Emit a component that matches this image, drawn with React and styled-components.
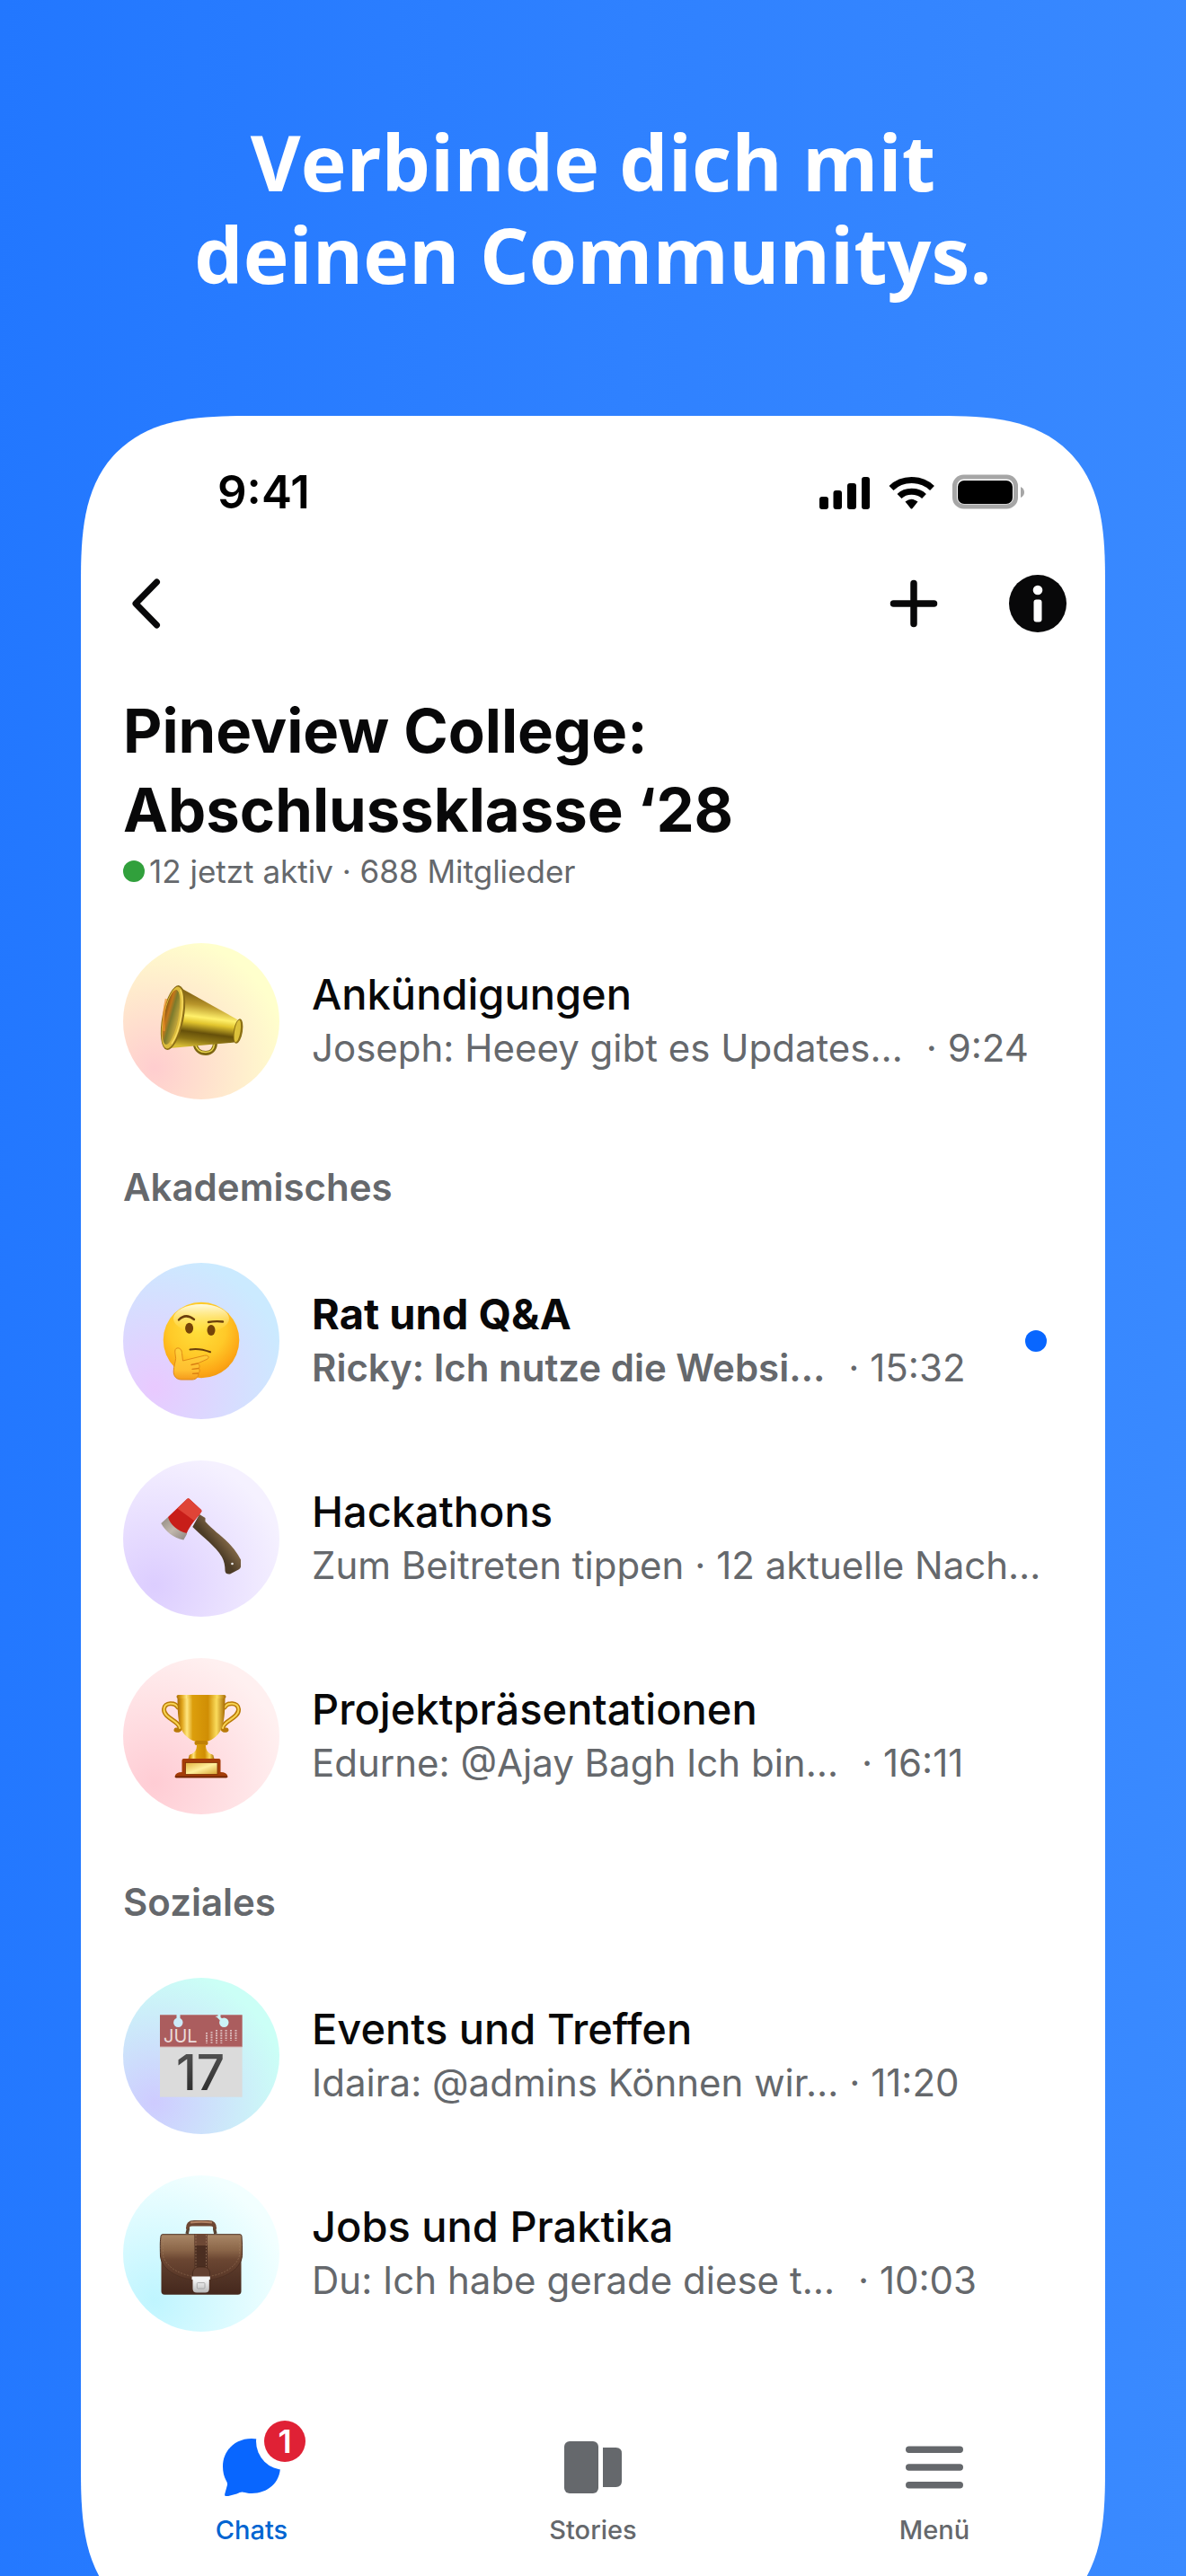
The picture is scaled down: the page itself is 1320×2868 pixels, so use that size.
import React from "react";
import styled, { createGlobalStyle } from "styled-components";

const GlobalStyle = createGlobalStyle`
  * {
    box-sizing: border-box;
  }

  body {
    margin: 0;
    background: #2e80ff;
  }
`;

const Page = styled.main`
  min-height: 100vh;
  padding: 128px 90px 0;
  overflow: hidden;
  background: linear-gradient(92deg, #2277ff 0%, #2f81ff 50%, #3a8aff 100%);
  font-family: Inter, "Liberation Sans", sans-serif;
  color: #080809;
`;

const Headline = styled.h1`
  margin: 0 0 129px;
  font-family: "Open Sans", Lato, sans-serif;
  font-size: 86px;
  font-weight: 700;
  line-height: 103px;
  text-align: center;
  color: #fff;
`;

// the lower edge of the phone runs out of the page
const Phone = styled.section`
  margin-bottom: -67px;
  padding: 55px 0 100px;
  border-radius: 145px;
  background: #fff;

  @supports (corner-shape: superellipse(1.5)) {
    border-radius: 185px;
    corner-shape: superellipse(1.5);
  }
`;

const StatusBar = styled.div`
  display: flex;
  align-items: center;
  justify-content: space-between;
  height: 60px;
  margin-bottom: 62px;
  padding: 0 88px 0 152px;
`;

const Clock = styled.time`
  font-size: 51px;
  font-weight: 600;
  line-height: 60px;
  color: #000;
`;

const TopBar = styled.header`
  display: flex;
  gap: 74px;
  margin-bottom: 66px;
  padding: 0 43px 0 47px;
`;

const IconButton = styled.button`
  width: 64px;
  height: 64px;
  margin-right: ${props => (props.$push ? "auto" : 0)};
  padding: 0;
  border: 0;
  background: none;
  color: inherit;

  svg {
    display: block;
  }
`;

const Content = styled.div`
  padding: 0 47px;
`;

const GroupTitle = styled.h2`
  margin: 0;
  font-size: 67px;
  font-weight: 700;
  line-height: 88px;
`;

const GroupMeta = styled.p`
  display: flex;
  align-items: center;
  gap: 5px;
  margin: 0 0 56px;
  font-size: 35px;
  line-height: 48px;
  color: #65686c;
`;

const Dot = styled.span`
  flex: none;
  width: 24px;
  height: 24px;
  margin-right: ${props => (props.$unread ? "18px" : 0)};
  border-radius: 50%;
  background: ${props => (props.$unread ? "#0866ff" : "#31a03c")};
`;

const SectionTitle = styled.h3`
  margin: 68px 0 54px;
  font-size: 42px;
  font-weight: 600;
  line-height: 60px;
  color: #65686c;
`;

const ChatList = styled.ul`
  display: flex;
  flex-direction: column;
  gap: 46px;
  margin: 0;
  padding: 0;
  list-style: none;
`;

const ChatRow = styled.a`
  display: flex;
  align-items: center;
  gap: 36px;
  color: inherit;
  text-decoration: none;
`;

const Avatar = styled.span`
  flex: none;
  width: 174px;
  height: 174px;
  border-radius: 50%;
  background: radial-gradient(
    circle at 20% 80%,
    ${props => props.$from},
    ${props => props.$to} 150px
  );

  svg {
    display: block;
  }
`;

const ChatText = styled.span`
  flex: 1;
  min-width: 0;
`;

const ChatName = styled.span`
  display: block;
  font-size: 47px;
  font-weight: ${props => (props.$unread ? 700 : 500)};
  line-height: 60px;
`;

const ChatPreview = styled.span`
  display: flex;
  gap: ${props => (props.$tight ? "12px" : "26px")};
  font-size: 42px;
  line-height: 60px;
  white-space: nowrap;
  color: #65686c;
`;

const Message = styled.span`
  font-weight: ${props => (props.$unread ? 600 : 400)};
`;

const TabBar = styled.nav`
  display: grid;
  grid-template-columns: repeat(3, 1fr);
  margin-top: 119px;
`;

const Tab = styled.a`
  display: flex;
  flex-direction: column;
  align-items: center;
  gap: 20px;
  font-size: 29px;
  font-weight: 500;
  line-height: 36px;
  text-decoration: none;
  color: ${props => (props.$active ? "#0064d1" : "#65686c")};
`;

const TabIcon = styled.span`
  position: relative;
  width: 64px;
  height: 64px;

  svg {
    display: block;
  }
`;

const Badge = styled.span`
  position: absolute;
  top: -20px;
  right: -28px;
  width: 46px;
  height: 46px;
  border-radius: 50%;
  box-shadow: 0 0 0 9px #fff;
  background: #e02135;
  font-size: 36px;
  font-weight: 600;
  line-height: 46px;
  text-align: center;
  color: #fff;
`;

const StatusIcons = () => (
    <svg width="230" height="40" viewBox="0 0 230 40" aria-hidden="true">
        <rect x="0" y="25" width="10" height="14" rx="3" />
        <rect x="15.500" y="18" width="9.500" height="21" rx="3" />
        <rect x="31" y="10" width="10" height="29" rx="3" />
        <rect x="47" y="3" width="9" height="36" rx="3" />
        <g fill="none" stroke="#000" strokeWidth="7">
            <path d="M80 15.500C92 3.500 113 3.500 125.500 15.500" />
            <path d="M89 24.500C96 17.500 109 17.500 116.500 24.500" />
        </g>
        <path d="M95.500 30.500Q102.500 25 109.500 30.500L103.500 38Q102.500 39 101.500 38Z" />
        <rect x="150.500" y="3" width="68" height="33" rx="10" fill="none" stroke="#a6a6a6" strokeWidth="5" />
        <rect x="154" y="7" width="61" height="26" rx="7" />
        <path d="M224 14v12q4-2 4-6t-4-6z" fill="#a6a6a6" />
    </svg>
);

const BackIcon = () => (
    <svg width="64" height="64" viewBox="0 0 64 64" fill="none" stroke="currentColor" strokeWidth="7" strokeLinecap="round" strokeLinejoin="round">
        <path d="M37.500 8L14 32l23.500 24" />
    </svg>
);

const PlusIcon = () => (
    <svg width="64" height="64" viewBox="0 0 64 64" stroke="currentColor" strokeWidth="7.500" strokeLinecap="round">
        <path d="M32 9.500v45M9.500 32h45" />
    </svg>
);

const InfoIcon = () => (
    <svg width="64" height="64" viewBox="0 0 64 64">
        <circle cx="32" cy="32" r="32" fill="currentColor" />
        <circle cx="32" cy="17" r="5.300" fill="#fff" />
        <rect x="27.500" y="27.500" width="9" height="25" rx="3" fill="#fff" />
    </svg>
);

const ChatsIcon = () => (
    <svg width="64" height="64" viewBox="0 0 64 64" fill="#0866ff">
        <path d="M32 0C50 0 64 13 64 31S50 61 32 61c-4 0-7-1-9.500-1.300-2-.4-4 .5-7 1.800L5 64.300c-2 .6-3.200-.6-2.800-2.500L5 51.500c.3-1.500-.3-3-1.200-4.500C1.200 42 0 37 0 31 0 13 14 0 32 0z" />
    </svg>
);

const StoriesIcon = () => (
    <svg width="64" height="64" viewBox="0 0 64 64" fill="#65686c">
        <rect x="0" y="3" width="38" height="58" rx="6" />
        <path d="M43 10h14.500q6.500 0 6.500 6.500v31q0 6.500-6.500 6.500H43z" />
    </svg>
);

const MenuIcon = () => (
    <svg width="64" height="64" viewBox="0 0 64 64" fill="#65686c">
        <rect y="8.500" width="64" height="7.500" rx="3.700" />
        <rect y="28.200" width="64" height="7.500" rx="3.700" />
        <rect y="48" width="64" height="7.500" rx="3.700" />
    </svg>
);

/* pictures inside the round avatars, all on a 174px canvas */

const Megaphone = () => (
    <svg width="174" height="174" viewBox="0 0 174 174">
        <defs>
            <linearGradient id="cone" x1="0.550" y1="0" x2="0.400" y2="1">
                <stop offset="0.120" stopColor="#8a6a16" />
                <stop offset="0.280" stopColor="#b8952a" />
                <stop offset="0.480" stopColor="#fff06a" />
                <stop offset="0.580" stopColor="#e2c52e" />
                <stop offset="0.740" stopColor="#66500a" />
                <stop offset="0.860" stopColor="#8b7314" />
                <stop offset="1" stopColor="#d8bd35" />
            </linearGradient>
            <linearGradient id="bell" x1="0" y1="0" x2="1" y2="0.300">
                <stop offset="0" stopColor="#6f4a10" />
                <stop offset="0.350" stopColor="#c4761a" />
                <stop offset="0.600" stopColor="#7c7a2c" />
                <stop offset="1" stopColor="#b99f3a" />
            </linearGradient>
        </defs>
        <path d="M80 112c1 7 6 10.500 12 10.500s10-4 10.500-11" fill="none" stroke="#7d6512" strokeWidth="5" />
        <path d="M80.500 113c1.500 6 6 8.500 11.500 8.500s9-3.500 9.500-9" fill="none" stroke="#ead64a" strokeWidth="1.500" />
        <path d="M66 51L127 85l-3 25.500L52 117z" fill="url(#cone)" />
        <ellipse cx="128" cy="98" rx="5" ry="14" transform="rotate(9 128 98)" fill="#8c7014" />
        <ellipse cx="127.300" cy="98" rx="3.200" ry="12.500" transform="rotate(9 127.300 98)" fill="#dcc13a" />
        <ellipse cx="55.500" cy="83" rx="12" ry="36.500" transform="rotate(11 55.500 83)" fill="#8a6c18" />
        <ellipse cx="55" cy="83" rx="10.500" ry="35" transform="rotate(11 55 83)" fill="#dcbb3c" />
        <ellipse cx="53.500" cy="82.500" rx="8" ry="31" transform="rotate(11 53.500 82.500)" fill="url(#bell)" />
        <path d="M48 62q-4 16-2.500 36" fill="none" stroke="#f0932a" strokeWidth="2.500" opacity="0.700" />
        <path d="M64 52c5 14 0 45-10 60" fill="none" stroke="#ffe46b" strokeWidth="1.500" opacity="0.800" />
    </svg>
);

const Thinking = () => (
    <svg width="174" height="174" viewBox="0 0 174 174">
        <defs>
            <radialGradient id="face" cx="0.450" cy="0.350" r="0.680">
                <stop offset="0" stopColor="#ffe03c" />
                <stop offset="0.550" stopColor="#ffc928" />
                <stop offset="0.850" stopColor="#fda816" />
                <stop offset="1" stopColor="#f2980f" />
            </radialGradient>
            <linearGradient id="shine" x1="0" y1="0" x2="0" y2="1">
                <stop offset="0" stopColor="#fffbe0" />
                <stop offset="1" stopColor="#ffec6a" stopOpacity="0" />
            </linearGradient>
            <linearGradient id="hand" x1="0" y1="0" x2="0" y2="1">
                <stop offset="0" stopColor="#ffd23b" />
                <stop offset="0.700" stopColor="#ffbf30" />
                <stop offset="1" stopColor="#f59a1c" />
            </linearGradient>
        </defs>
        <circle cx="87" cy="86" r="42.300" fill="url(#face)" />
        <ellipse cx="87" cy="62" rx="31" ry="16" fill="url(#shine)" />
        <ellipse cx="73.600" cy="72.800" rx="4.500" ry="6" fill="#754308" />
        <ellipse cx="98" cy="75" rx="4.500" ry="6" fill="#754308" />
        <g fill="none" stroke="#6b3f0c" strokeLinecap="round">
            <path d="M62 63.500q7.500-8 17-.5" strokeWidth="2.400" />
            <path d="M95 66q8-1.500 16-.5" strokeWidth="2.400" />
            <path d="M74.500 96.500q10-2 22.500 2.800" strokeWidth="2" />
        </g>
        <path d="M60 95c3-.8 5.500 2 5.500 5.500l1 8.500 24-5.800c4.500-1 6.500 2.500 2.500 4.300L83 112c2.500 1.500 2.500 4 1.200 5.500 1.600 1.600 1.300 4-.4 5.200.8 3.300-2.300 7.300-6.800 7.300H65c-5.500 0-8.800-3.500-8.800-9 0-6.500 2.300-10.500 2.400-14.500 0-4-2.600-10.500 1.400-11.500z" fill="url(#hand)" stroke="#e08a16" strokeWidth="1" />
        <path d="M83 112l-7 1.500M84 117.500l-7 .8M83.500 123l-6 .3" stroke="#d97e12" strokeWidth="1.300" fill="none" strokeLinecap="round" />
    </svg>
);

const Axe = () => (
    <svg width="174" height="174" viewBox="0 0 174 174">
        <defs>
            <linearGradient id="wood" x1="0.700" y1="0.200" x2="0.400" y2="0.500">
                <stop offset="0" stopColor="#433420" />
                <stop offset="0.400" stopColor="#7d6444" />
                <stop offset="1" stopColor="#4d3c27" />
            </linearGradient>
            <linearGradient id="steel" x1="0" y1="0" x2="1" y2="1">
                <stop offset="0" stopColor="#8f8880" />
                <stop offset="0.500" stopColor="#c2b8ad" />
                <stop offset="1" stopColor="#8c8580" />
            </linearGradient>
        </defs>
        <path d="M85 60l6.500 4v4c8 9 17 15 25 23 7 7 11 13 14.500 19.500v8q-.5 2-2.500 3l-9.500 5q-5 .5-5.500-3.500c0-6-1-11-3.500-15.500-7-12-21-22-32.700-33.500z" fill="url(#wood)" />
        <circle cx="121.500" cy="115" r="1.300" fill="#eee" />
        <path d="M50 63l-7.700 7c4 8 14 17 25 18.500l4-7z" fill="url(#steel)" />
        <path d="M71 43q1.600-1.500 3 0L87 55q1 1 0 2.500c-6 8-12 14-16.200 23.500C61 79 52 71 50 63z" fill="#c81e19" />
        <path d="M71 43q1.600-1.500 3 0L87 55q1 1 0 2.500L79 67 60.500 53.500z" fill="#df4437" />
    </svg>
);

const Trophy = () => (
    <svg width="174" height="174" viewBox="0 0 174 174">
        <defs>
            <linearGradient id="gold" x1="0" y1="0" x2="1" y2="0">
                <stop offset="0" stopColor="#a86a02" />
                <stop offset="0.100" stopColor="#e0a51c" />
                <stop offset="0.200" stopColor="#ffe680" />
                <stop offset="0.320" stopColor="#dc9e0c" />
                <stop offset="0.640" stopColor="#d08e04" />
                <stop offset="0.820" stopColor="#fbdc5c" />
                <stop offset="1" stopColor="#a86a02" />
            </linearGradient>
            <linearGradient id="plaque" x1="0" y1="0" x2="1" y2="1">
                <stop offset="0" stopColor="#e2b23e" />
                <stop offset="0.500" stopColor="#fff09c" />
                <stop offset="1" stopColor="#d8a232" />
            </linearGradient>
        </defs>
        <g fill="none" strokeLinecap="round">
            <path d="M61 55c-3-6-15-6-15.500 2C45 67 63 70 63 78q0 3-4 2" stroke="#b97a08" strokeWidth="5" />
            <path d="M61 55c-3-6-15-6-15.500 2C45 67 63 70 63 78" stroke="#f8d453" strokeWidth="2" />
            <path d="M113 55c3-6 15-6 15.500 2 .5 10-17.500 13-17.500 21q0 3 4 2" stroke="#b97a08" strokeWidth="5" />
            <path d="M113 55c3-6 15-6 15.500 2 .5 10-17.500 13-17.500 21" stroke="#f8d453" strokeWidth="2" />
        </g>
        <path d="M60.500 43h53c-.2 14-.3 24-3 33-3 9-10 15.500-18 17h-11c-8-1.500-15-8-18-17-2.700-9-2.800-19-3-33z" fill="url(#gold)" />
        <rect x="59.500" y="41" width="55" height="4" rx="2" fill="url(#gold)" />
        <rect x="79.500" y="92" width="15" height="5" rx="2.500" fill="#c08106" />
        <path d="M82 96h10c0 7 2 9 9 13H73c7-4 9-6 9-13z" fill="url(#gold)" />
        <path d="M75 107h24q2.500 2 2.500 5.500h-29q0-3.500 2.500-5.500z" fill="url(#gold)" />
        <path d="M67.500 112h39q2 0 2 2v13q7 0 8 5 0 1.300-1.500 1.300H59q-1.500 0-1.500-1.300 1-5 8-5v-13q0-2 2-2z" fill="#a43d08" />
        <path d="M58 131.500h58v1q-.5.800-1 .8H59q-1 0-1-1z" fill="#6f2604" />
        <rect x="69.500" y="116.500" width="35.500" height="13" fill="url(#plaque)" stroke="#7e3006" strokeWidth="0.800" />
    </svg>
);

const Calendar = () => (
    <svg width="174" height="174" viewBox="0 0 174 174">
        <defs>
            <linearGradient id="ink" x1="0" y1="0" x2="0" y2="1">
                <stop offset="0" stopColor="#5a5a5a" />
                <stop offset="1" stopColor="#262626" />
            </linearGradient>
            <mask id="holes">
                <rect width="174" height="174" fill="#fff" />
                <circle cx="61.300" cy="49.700" r="5.200" />
                <circle cx="112.300" cy="49.700" r="5.200" />
                <path d="M59.500 40h4v8h-4zM105.500 40h3v4l4 3-3 2-5-5-2-1 3-.5z" />
            </mask>
        </defs>
        <g mask="url(#holes)">
            <rect x="41" y="41.300" width="91.600" height="91.400" fill="#dbdbdb" />
            <rect x="41" y="41.300" width="91.600" height="35.500" fill="#ab5d5e" />
            <path d="M41 76.800h91.600" stroke="#c99a9a" strokeWidth="0.800" />
        </g>
        <text x="45" y="71.500" fontSize="20" fontFamily="Inter, sans-serif" fill="#ead9d9">JUL</text>
        <path d="M93 61v12M98.500 60v13M104 58v15M109.300 58v15M114.600 58v12M120 58v12M125.500 58v12" stroke="#dfc3c3" strokeWidth="2" strokeDasharray="1.600 1.200" />
        <text x="86" y="124.500" fontSize="55" fontWeight="500" fontFamily="Inter, sans-serif" textAnchor="middle" fill="url(#ink)">17</text>
    </svg>
);

const Briefcase = () => (
    <svg width="174" height="174" viewBox="0 0 174 174">
        <defs>
            <linearGradient id="flap" x1="0" y1="0" x2="0" y2="1">
                <stop offset="0" stopColor="#a98767" />
                <stop offset="0.350" stopColor="#8a6548" />
                <stop offset="0.550" stopColor="#6b4632" />
                <stop offset="1" stopColor="#573627" />
            </linearGradient>
            <linearGradient id="body" x1="0" y1="0" x2="0" y2="1">
                <stop offset="0" stopColor="#6b4734" />
                <stop offset="1" stopColor="#44281d" />
            </linearGradient>
            <linearGradient id="lock" x1="0" y1="0" x2="0" y2="1">
                <stop offset="0" stopColor="#fafafa" />
                <stop offset="1" stopColor="#b9b9b9" />
            </linearGradient>
        </defs>
        <path d="M71 65c1-3 2-5 1-8M103 65c-1-3-2-5-1-8" stroke="#5a4534" strokeWidth="3.500" fill="none" />
        <path d="M70 59.500q-.5-9.500 9-9.500h16q9.500 0 9 9.500-3 1-4-2-.5-1-3-1H77q-2.500 0-3 1-1 3-4 2z" fill="#6e4733" />
        <path d="M75 52.500q12-1.500 24 0" stroke="#b48567" strokeWidth="1.800" fill="none" />
        <path d="M42.500 80h89v49q0 3.700-3.700 3.700H46.200q-3.700 0-3.700-3.700z" fill="url(#body)" />
        <path d="M44 65.700h86q2 0 2 2 .8 8 .5 22c-2 17-23 27-45.500 27S43.500 107 41.500 90c-.3-14-.3-16 .5-22.300q0-2 2-2z" fill="url(#flap)" stroke="#4e3022" strokeWidth="1" />
        <path d="M44.500 69v20c3 14 22 24 42.500 24s39.500-10 42.500-24V69" stroke="#a98566" strokeWidth="0.600" strokeDasharray="2 1.500" fill="none" opacity="0.700" />
        <rect x="79.500" y="65" width="14.500" height="38" fill="#4b2e21" />
        <rect x="79.500" y="65" width="14.500" height="13" fill="#6d4835" />
        <path d="M81 66v37M92.500 66v37" stroke="#a07a5e" strokeWidth="0.700" strokeDasharray="2 1.500" />
        <path d="M77.500 114v-6q1-6 7-6h5q6 0 7 6v6z" fill="#634030" stroke="#432619" strokeWidth="0.700" />
        <path d="M77.500 115h18.300v11q0 4.500-4.500 4.500H82q-4.500 0-4.500-4.500z" fill="url(#lock)" />
        <rect x="76.500" y="112.500" width="20.300" height="3.500" fill="#f4f4f4" />
        <rect x="82.300" y="119.500" width="8.700" height="6.500" rx="1" fill="none" stroke="#a0a0a0" strokeWidth="0.800" />
    </svg>
);

const sections = [
    {
        chats: [
            { name: "Ankündigungen", text: "Joseph: Heeey gibt es Updates…", time: "9:24", icon: Megaphone, from: "#ffcdcf", to: "#ffffcc" }
        ]
    },
    {
        title: "Akademisches",
        chats: [
            { name: "Rat und Q&A", text: "Ricky: Ich nutze die Websi…", time: "15:32", icon: Thinking, from: "#e9c9ff", to: "#cbeaff", unread: true },
            { name: "Hackathons", text: "Zum Beitreten tippen · 12 aktuelle Nach…", icon: Axe, from: "#dccdff", to: "#f5f1ff" },
            { name: "Projektpräsentationen", text: "Edurne: @Ajay Bagh Ich bin…", time: "16:11", icon: Trophy, from: "#ffccd4", to: "#fff0f0" }
        ]
    },
    {
        title: "Soziales",
        chats: [
            { name: "Events und Treffen", text: "Idaira: @admins Können wir…", time: "11:20", icon: Calendar, from: "#cecbff", to: "#cbfff6", tight: true },
            { name: "Jobs und Praktika", text: "Du: Ich habe gerade diese t…", time: "10:03", icon: Briefcase, from: "#bff5ff", to: "#f2ffff" }
        ]
    }
];

const Chat = ({ chat }) => {
    const Icon = chat.icon;

    return (
        <li>
            <ChatRow href="#chat">
                <Avatar $from={chat.from} $to={chat.to} aria-hidden="true">
                    <Icon />
                </Avatar>
                <ChatText>
                    <ChatName $unread={chat.unread}>{chat.name}</ChatName>
                    <ChatPreview $tight={chat.tight}>
                        <Message $unread={chat.unread}>{chat.text}</Message>
                        {chat.time && <span>· {chat.time}</span>}
                    </ChatPreview>
                </ChatText>
                {chat.unread && <Dot $unread />}
            </ChatRow>
        </li>
    );
};

const App = () => (
    <Page>
        <GlobalStyle />
        <Headline>
            Verbinde dich mit
            <br />
            deinen Communitys.
        </Headline>

        <Phone>
            <StatusBar>
                <Clock>9:41</Clock>
                <StatusIcons />
            </StatusBar>

            <TopBar>
                <IconButton type="button" aria-label="Zurück" $push>
                    <BackIcon />
                </IconButton>
                <IconButton type="button" aria-label="Hinzufügen">
                    <PlusIcon />
                </IconButton>
                <IconButton type="button" aria-label="Info">
                    <InfoIcon />
                </IconButton>
            </TopBar>

            <Content>
                <GroupTitle>
                    Pineview College:
                    <br />
                    Abschlussklasse ‘28
                </GroupTitle>
                <GroupMeta>
                    <Dot />
                    12 jetzt aktiv · 688 Mitglieder
                </GroupMeta>

                {sections.map((section, i) => (
                    <React.Fragment key={i}>
                        {section.title && <SectionTitle>{section.title}</SectionTitle>}
                        <ChatList>
                            {section.chats.map(chat => (
                                <Chat key={chat.name} chat={chat} />
                            ))}
                        </ChatList>
                    </React.Fragment>
                ))}
            </Content>

            <TabBar>
                <Tab href="#chats" $active>
                    <TabIcon>
                        <ChatsIcon />
                        <Badge>1</Badge>
                    </TabIcon>
                    Chats
                </Tab>
                <Tab href="#stories">
                    <TabIcon>
                        <StoriesIcon />
                    </TabIcon>
                    Stories
                </Tab>
                <Tab href="#menu">
                    <TabIcon>
                        <MenuIcon />
                    </TabIcon>
                    Menü
                </Tab>
            </TabBar>
        </Phone>
    </Page>
);

export default App;
